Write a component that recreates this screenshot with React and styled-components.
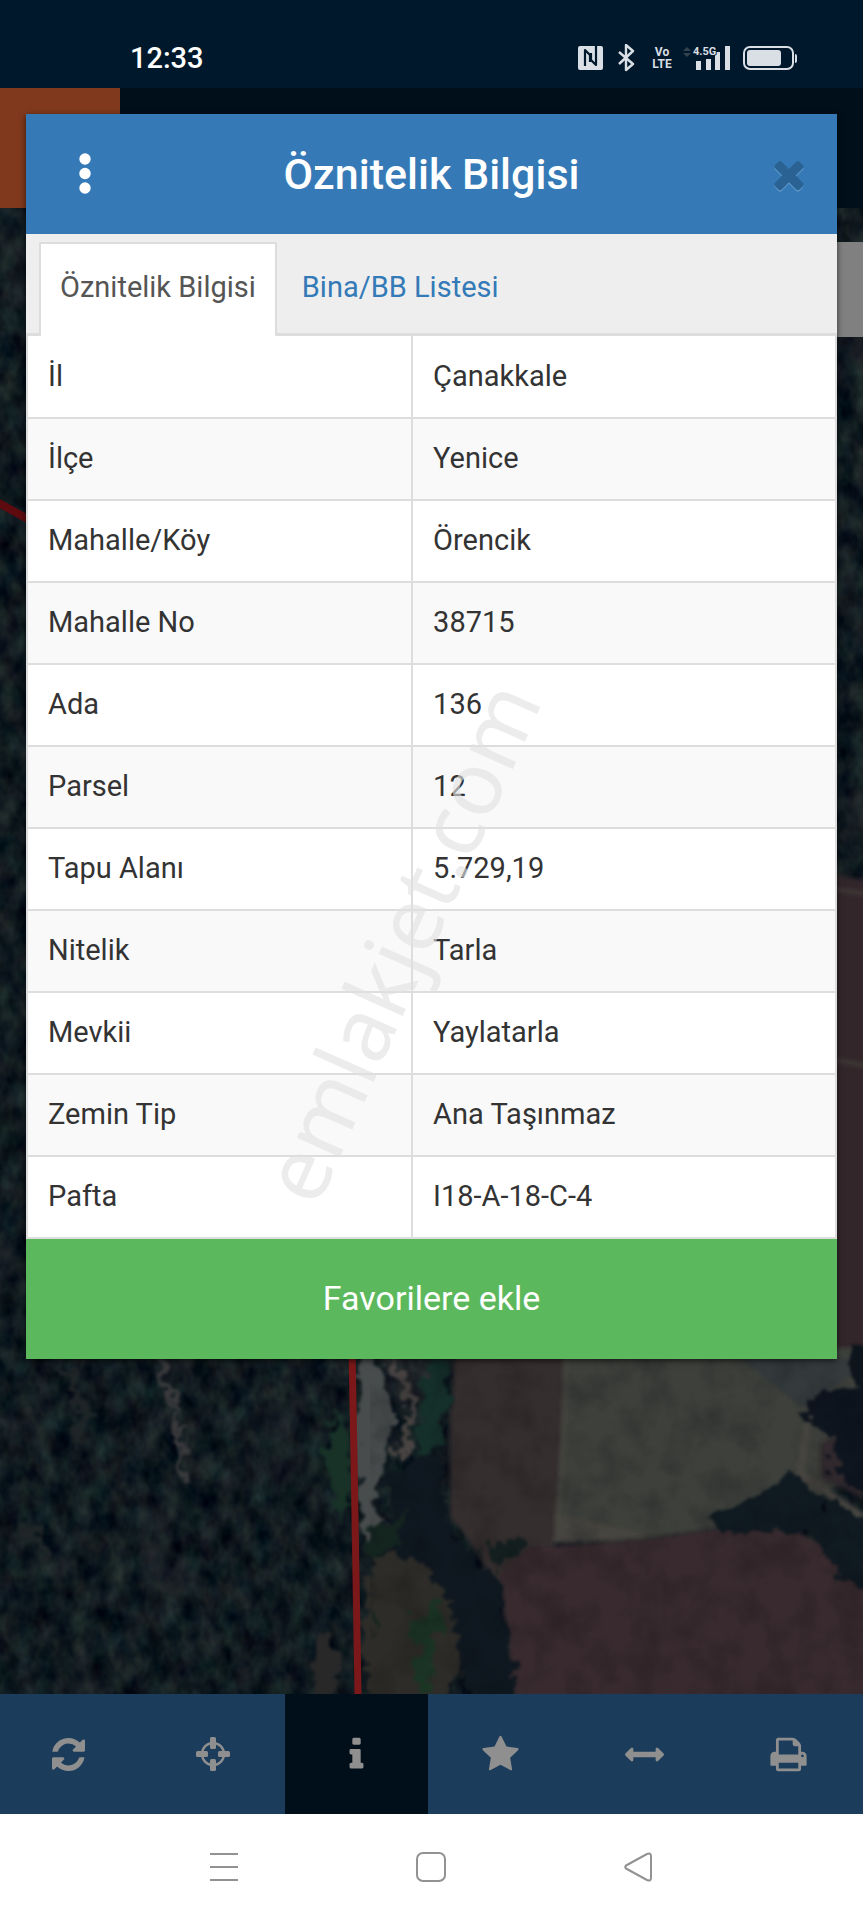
import React, { useState } from "react";
import styled, { createGlobalStyle } from "styled-components";

const GlobalStyle = createGlobalStyle`
  * {
    box-sizing: border-box;
  }

  body {
    margin: 0;
    background: #000f1a;
    font-family: Roboto, "Liberation Sans", sans-serif;
  }

  button {
    font-family: inherit;
    border: none;
    padding: 0;
    cursor: pointer;
  }
`;

const Screen = styled.div`
  position: relative;
  display: flex;
  flex-direction: column;
  min-height: 100vh;
`;

const StatusBar = styled.header`
  display: flex;
  align-items: center;
  justify-content: space-between;
  height: 88px;
  padding: 28px 66px 0 130px;
  background: #00182b;
  color: #fff;
`;

const Clock = styled.time`
  font-size: 29px;
  line-height: 32px;
  font-weight: 500;
`;

const StatusIcons = styled.div`
  display: flex;
  align-items: center;
  color: #d9dfe5;

  svg {
    display: block;
  }
`;

const Volte = styled.div`
  display: flex;
  flex-direction: column;
  align-items: center;
  width: 22px;
  margin: 0 10px 0 16px;
  font-size: 12px;
  line-height: 12px;
  font-weight: 700;
`;

const AppBar = styled.div`
  height: 120px;
  background: #000f1a;
`;

const AppLogo = styled.div`
  width: 120px;
  height: 100%;
  background: #80391c;
`;

const MapArea = styled.main`
  position: relative;
  flex: 1;
  min-height: 1180px;
  overflow: hidden;
  background: #111b21;

  & > svg {
    position: absolute;
    width: 100%;
    height: 100%;
  }
`;

const SidePanel = styled.div`
  position: absolute;
  top: 34px;
  right: 0;
  width: 60px;
  height: 95px;
  background: #808080;
`;

const Toolbar = styled.nav`
  height: 120px;
  background: #1b3d5b;
`;

const ToolList = styled.div`
  display: grid;
  grid-template-columns: repeat(6, 1fr);
  height: 100%;
  margin: 0 3px 0 -3px;
`;

const ToolButton = styled.button`
  display: flex;
  align-items: center;
  justify-content: center;
  color: #8f8f8f;
  background: ${({ $active }) => ($active ? "#000f1a" : "transparent")};
`;

const SystemNav = styled.nav`
  display: grid;
  grid-template-columns: repeat(3, 24%);
  justify-content: center;
  height: 106px;
  background: #fff;

  button {
    display: flex;
    align-items: center;
    justify-content: center;
    background: none;
  }
`;

const Dialog = styled.section`
  position: absolute;
  top: 114px;
  left: 26px;
  right: 26px;
  background: #fff;
  box-shadow: 0 2px 6px rgba(0, 0, 0, 0.6);
`;

const DialogHeader = styled.div`
  display: grid;
  grid-template-columns: 117px 1fr 117px;
  align-items: center;
  height: 120px;
  background: #357ab7;
`;

const DialogTitle = styled.h1`
  margin: 0;
  color: #fff;
  font-size: 43px;
  line-height: 48px;
  font-weight: 500;
  text-align: center;
`;

const IconButton = styled.button`
  display: flex;
  align-items: center;
  justify-content: center;
  justify-self: ${({ $end }) => ($end ? "end" : "stretch")};
  min-width: 97px;
  height: 100%;
  background: none;
  color: ${({ color }) => color};
`;

const Tabs = styled.div`
  display: flex;
  gap: 4px;
  height: 102px;
  padding: 8px 13px 0;
  background: #eeeeef;
  border-bottom: 3px solid #ddd;
`;

const Tab = styled.button`
  height: 94px;
  padding: 0 19px 6px;
  border: 2px solid ${({ $active }) => ($active ? "#ddd" : "transparent")};
  border-bottom: none;
  background: ${({ $active }) => ($active ? "#fff" : "transparent")};
  color: ${({ $active }) => ($active ? "#555" : "#337ab7")};
  font-size: 29px;
  line-height: 40px;
`;

const TableWrapper = styled.div`
  position: relative;
`;

const Table = styled.table`
  width: 100%;
  table-layout: fixed;
  border-collapse: collapse;

  tr:nth-child(even) {
    background: #f9f9f9;
  }

  tr:first-child > * {
    border-top: none;
  }

  th,
  td {
    height: 82px;
    padding: 0 20px 2px;
    border: 2px solid #ddd;
    color: #333;
    font-size: 29px;
    line-height: 40px;
    font-weight: 400;
    text-align: left;
  }

  th {
    width: 47.6%;
  }
`;

const Watermark = styled.span`
  position: absolute;
  top: 67%;
  left: 46%;
  color: rgba(225, 225, 225, 0.62);
  font-family: "Noto Sans", "Open Sans", sans-serif;
  font-size: 88px;
  line-height: 96px;
  transform: translate(-50%, -50%) rotate(-66deg);
  pointer-events: none;
`;

const FavoriteButton = styled.button`
  display: block;
  width: 100%;
  height: 120px;
  padding-bottom: 2px;
  background: #5cb85c;
  color: #fff;
  font-size: 34px;
  line-height: 40px;
`;

const ROWS = [
  ["İl", "Çanakkale"],
  ["İlçe", "Yenice"],
  ["Mahalle/Köy", "Örencik"],
  ["Mahalle No", "38715"],
  ["Ada", "136"],
  ["Parsel", "12"],
  ["Tapu Alanı", "5.729,19"],
  ["Nitelik", "Tarla"],
  ["Mevkii", "Yaylatarla"],
  ["Zemin Tip", "Ana Taşınmaz"],
  ["Pafta", "I18-A-18-C-4"],
];

const TABS = ["Öznitelik Bilgisi", "Bina/BB Listesi"];

// all on a 1792 unit grid
const TOOLS = [
  {
    label: "Yenile",
    box: "0 0 1536 1792",
    width: 33,
    path: "M1511 1056q0 5-1 7-64 268-268 434.5t-478 166.5q-146 0-282.5-55t-243.5-157l-129 129q-19 19-45 19t-45-19-19-45v-448q0-26 19-45t45-19h448q26 0 45 19t19 45-19 45l-137 137q71 66 161 102t187 36q134 0 250-65t186-179q11-17 53-117 8-23 30-23h192q13 0 22.5 9.5t9.5 22.5zm25-800v448q0 26-19 45t-45 19h-448q-26 0-45-19t-19-45 19-45l138-138q-148-137-349-137-134 0-250 65t-186 179q-11 17-53 117-8 23-30 23h-199q-13 0-22.5-9.5t-9.5-22.5v-7q65-268 270-434.5t480-166.5q146 0 284 55.5t245 156.5l130-129q19-19 45-19t45 19 19 45z",
  },
  { label: "Konum", crosshair: true },
  {
    label: "Bilgi",
    path: "M1216 1344v128q0 26-19 45t-45 19h-512q-26 0-45-19t-19-45v-128q0-26 19-45t45-19h64v-384h-64q-26 0-45-19t-19-45v-128q0-26 19-45t45-19h384q26 0 45 19t19 45v576h64q26 0 45 19t19 45zm-128-1152v192q0 26-19 45t-45 19h-256q-26 0-45-19t-19-45v-192q0-26 19-45t45-19h256q26 0 45 19t19 45z",
  },
  {
    label: "Favoriler",
    path: "M1728 647q0 22-26 48l-363 354 86 500q1 7 1 20 0 21-10.5 35.5t-30.5 14.5q-19 0-40-12l-449-236-449 236q-22 12-40 12-21 0-31.5-14.5t-10.5-35.5q0-6 2-20l86-500-364-354q-25-27-25-48 0-37 56-46l502-73 225-455q19-41 49-41t49 41l225 455 502 73q56 9 56 46z",
  },
  {
    label: "Ölçüm",
    path: "M1792 896q0 26-19 45l-256 256q-19 19-45 19t-45-19-19-45v-128h-1024v128q0 26-19 45t-45 19-45-19l-256-256q-19-19-19-45t19-45l256-256q19-19 45-19t45 19 19 45v128h1024v-128q0-26 19-45t45-19 45 19l256 256q19 19 19 45z",
  },
  {
    label: "Yazdır",
    path: "M448 1536h896v-256h-896v256zm0-640h896v-384h-160q-40 0-68-28t-28-68v-160h-640v640zm1152 64q0-26-19-45t-45-19-45 19-19 45 19 45 45 19 45-19 19-45zm128 0v416q0 13-9.5 22.5t-22.5 9.5h-224v160q0 40-28 68t-68 28h-960q-40 0-68-28t-28-68v-160h-224q-13 0-22.5-9.5t-9.5-22.5v-416q0-79 56.5-135.5t135.5-56.5h64v-544q0-40 28-68t68-28h672q40 0 88 20t76 48l152 152q28 28 48 76t20 88v256h64q79 0 135.5 56.5t56.5 135.5z",
  },
];

const CLOSE_PATH =
  "M1490 1322q0 40-28 68l-136 136q-28 28-68 28t-68-28l-294-294-294 294q-28 28-68 28t-68-28l-136-136q-28-28-28-68t28-68l294-294-294-294q-28-28-28-68t28-68l136-136q28-28 68-28t68 28l294 294 294-294q28-28 68-28t68 28l136 136q28 28 28 68t-28 68l-294 294 294 294q28 28 28 68z";

const ToolIcon = ({ tool }) => {
  if (tool.crosshair) {
    return (
      <svg width="34" height="34" viewBox="0 0 34 34" fill="currentColor">
        <circle cx="17" cy="17" r="11" fill="none" stroke="currentColor" strokeWidth="2.4" />
        <rect x="14" y="0" width="6" height="12" rx="1.5" />
        <rect x="14" y="22" width="6" height="12" rx="1.5" />
        <rect x="0" y="14" width="12" height="6" rx="1.5" />
        <rect x="22" y="14" width="12" height="6" rx="1.5" />
      </svg>
    );
  }
  return (
    <svg
      width={tool.width || 39}
      height="39"
      viewBox={tool.box || "0 0 1792 1792"}
      fill="currentColor"
    >
      <path d={tool.path} />
    </svg>
  );
};

const PhoneStatus = () => (
  <StatusIcons>
    <svg width="57" height="28" viewBox="0 0 57 28" fill="none">
      <rect x="0" y="2" width="25" height="24" rx="2" fill="currentColor" />
      <path
        d="M7 22V6l5 5v7M18 2v19l-5-5V9"
        stroke="#00182b"
        strokeWidth="2.2"
        strokeLinejoin="round"
      />
      <path
        d="M41 8l14 12-7 6V1l7 6-14 13"
        stroke="currentColor"
        strokeWidth="2.4"
        strokeLinejoin="round"
      />
    </svg>
    <Volte>
      <span>Vo</span>
      <span>LTE</span>
    </Volte>
    <svg width="48" height="28" viewBox="0 0 48 28" fill="currentColor">
      <path d="M0 7l4-4 4 4zM0 9l4 4 4-4z" fill="#34424f" />
      <rect x="13" y="17" width="5" height="9" />
      <rect x="23" y="15" width="5" height="11" />
      <rect x="32" y="8" width="5" height="18" />
      <rect x="42" y="2" width="5" height="24" />
      <text
        x="10"
        y="11"
        fontFamily="Roboto, sans-serif"
        fontSize="11"
        fontWeight="700"
        stroke="#00182b"
        strokeWidth="2"
        paintOrder="stroke"
      >
        4.5G
      </text>
    </svg>
    <svg width="66" height="28" viewBox="-12 0 66 28" fill="none">
      <rect x="1" y="3" width="49" height="22" rx="6" stroke="currentColor" strokeWidth="2" />
      <rect x="4" y="6" width="34" height="16" rx="3" fill="currentColor" />
      <path d="M52 10q2 0 2 2v5q0 2-2 2z" fill="currentColor" />
    </svg>
  </StatusIcons>
);

const SatelliteMap = () => (
  <svg viewBox="0 0 863 1486" preserveAspectRatio="xMidYMax slice" aria-hidden="true">
    <defs>
      <filter
        id="forest"
        x="0"
        y="0"
        width="100%"
        height="100%"
        colorInterpolationFilters="sRGB"
      >
        <feTurbulence type="fractalNoise" baseFrequency="0.055 0.04" numOctaves="3" seed="7" />
        <feColorMatrix values="0.22 0.07 0 0 -0.085  0.25 0 0 0 -0.025  0.18 0 0.04 0 0.01  0 0 0 0 1" />
      </filter>
      <filter
        id="clearings"
        x="0"
        y="0"
        width="100%"
        height="100%"
        colorInterpolationFilters="sRGB"
      >
        <feTurbulence type="fractalNoise" baseFrequency="0.016 0.01" numOctaves="4" seed="12" />
        <feColorMatrix values="0 0 0 0 0.23  0 0 0 0 0.22  0 0 0 0 0.23  3 0 0 0 -1.75" />
      </filter>
      <filter
        id="soil"
        x="0"
        y="0"
        width="100%"
        height="100%"
        colorInterpolationFilters="sRGB"
      >
        <feTurbulence type="fractalNoise" baseFrequency="0.03" numOctaves="5" seed="3" />
        <feColorMatrix values="0 0 0 0 0  0 0 0 0 0  0 0 0 0 0.03  0.4 0 0 0 -0.16" />
      </filter>
      <filter
        id="ragged"
        x="-10%"
        y="-10%"
        width="120%"
        height="120%"
        colorInterpolationFilters="sRGB"
      >
        <feTurbulence type="fractalNoise" baseFrequency="0.06" numOctaves="3" seed="5" />
        <feDisplacementMap
          in="SourceGraphic"
          scale="30"
          xChannelSelector="R"
          yChannelSelector="G"
        />
        <feGaussianBlur stdDeviation="1.6" />
      </filter>
      <filter id="soft">
        <feGaussianBlur stdDeviation="2" />
      </filter>
      <clipPath id="edge">
        <path d="M370 1140h493v346H370z" />
      </clipPath>
    </defs>
    <rect width="863" height="1486" filter="url(#forest)" />
    <rect width="863" height="1486" filter="url(#clearings)" opacity="0.5" />

    <g filter="url(#soft)">
      <path d="M825 665l43 8v470l-43 20z" fill="#30282b" />
      <path d="M825 680l43 6M825 850l43 8" stroke="#3d3535" strokeWidth="5" />
      <path d="M455 1140H568V1240L558 1330 530 1372 500 1380 460 1320 450 1310V1220z" fill="#342d2f" />
      <path d="M566 1140H868V1260L800 1300 715 1320 640 1331 555 1335z" fill="#3c3f3a" />
      <path d="M566 1140l-3 100-7 95" stroke="#474642" strokeWidth="4" fill="none" />
      <path d="M555 1305l90 20 0 6-90 4z" fill="#46443f" />
      <path d="M500 1368l28-28 112-8 80-12h70l78 40v136H500l10-46z" fill="#382b2e" />
      <path d="M808 1215l-8 50 63 45M808 1210l40-60" stroke="#4a4642" strokeWidth="8" fill="none" />
      <path d="M820 1235l43-20v75l-43-20z" fill="#332b2d" />
      <path d="M740 1150h123v10l-60 40z" fill="#353b3c" />
    </g>

    <g filter="url(#ragged)">
      <path d="M358 1140h18l14 48 8 20-8 34-12 40 4 30-12 24-14-16z" fill="#484c4c" />
      <path d="M390 1150l20 40v35l-16 26" stroke="#4a4543" strokeWidth="7" fill="none" />
      <path d="M155 1145l12 35 12 30-2 40 8 25" stroke="#3a3a3c" strokeWidth="6" fill="none" />
      <path d="M60 1150l25 60-12 30M20 1310l30 40" stroke="#1f2527" strokeWidth="8" fill="none" />
      <path d="M430 1140h20l-2 60-14 50-18 30 5-70z" fill="#15302a" />
      <path d="M335 1200l14 30 2 50-10 40-16-70z" fill="#183227" />
      <path d="M370 1350l50-10 35 60 8 50-20 46h-70l-12-60z" fill="#2d2c28" />
      <path d="M318 1430l25 12-8 44h-24z" fill="#292829" />
      <path d="M385 1270l50-30 18 90 50 50 14 116h-46l-14-80-30-60-30-6z" fill="#0f1820" />
      <path d="M415 1405l22-16 8 30-12 16 0 50-20-10z" fill="#1b3525" />
      <path d="M368 1320l40-15-8 32-30 15zM370 1395l12 18-8 14z" fill="#14241f" />
      <path d="M480 1340l40-14 4 16-30 22z" fill="#14201f" />
      <path d="M708 1315l40-24 44-24 24 20 57 30v66l-40-18-15-35-40-10-46 5z" fill="#101a21" />
      <path d="M805 1195l68-30v125l-40-24 4-40-32-10z" fill="#0e151f" />
      <path d="M850 1140h23v32h-18z" fill="#0d141c" />
    </g>
    <g clipPath="url(#edge)">
      <rect width="863" height="1486" filter="url(#soil)" />
    </g>

    <path d="M-5 293l40 22" stroke="#5e0b10" strokeWidth="8" />
    <path d="M352 1140l2 110 4 236" stroke="#7c1819" strokeWidth="7" fill="none" />
  </svg>
);

const App = () => {
  const [activeTab, setActiveTab] = useState(0);
  const [activeTool, setActiveTool] = useState("Bilgi");

  return (
    <Screen>
      <GlobalStyle />
      <StatusBar>
        <Clock>12:33</Clock>
        <PhoneStatus />
      </StatusBar>
      <AppBar>
        <AppLogo />
      </AppBar>
      <MapArea>
        <SatelliteMap />
        <SidePanel />
      </MapArea>
      <Toolbar>
        <ToolList>
          {TOOLS.map((tool) => (
            <ToolButton
              key={tool.label}
              type="button"
              aria-label={tool.label}
              $active={tool.label === activeTool}
              onClick={() => setActiveTool(tool.label)}
            >
              <ToolIcon tool={tool} />
            </ToolButton>
          ))}
        </ToolList>
      </Toolbar>
      <SystemNav>
        <button type="button" aria-label="Son uygulamalar">
          <svg width="30" height="30" viewBox="0 0 30 30" stroke="#929292" strokeWidth="2">
            <path d="M1 2h28M1 15h28M1 28h28" />
          </svg>
        </button>
        <button type="button" aria-label="Ana ekran">
          <svg width="30" height="30" viewBox="0 0 30 30" fill="none" stroke="#929292" strokeWidth="2">
            <rect x="1" y="1" width="28" height="28" rx="6" />
          </svg>
        </button>
        <button type="button" aria-label="Geri">
          <svg
            width="30"
            height="30"
            viewBox="0 0 30 30"
            fill="none"
            stroke="#929292"
            strokeWidth="2"
            strokeLinejoin="round"
          >
            <path d="M2 13.500q-1.500 1.500 0 3L23 28q4 1.500 4-2V4q0-3.500-4-2z" />
          </svg>
        </button>
      </SystemNav>

      <Dialog role="dialog" aria-labelledby="dialog-title">
        <DialogHeader>
          <IconButton type="button" aria-label="Menü" color="#fff">
            <svg width="12" height="42" viewBox="0 0 12 42" fill="currentColor">
              <circle cx="6" cy="6" r="5.700" />
              <circle cx="6" cy="20.500" r="5.700" />
              <circle cx="6" cy="35" r="5.700" />
            </svg>
          </IconButton>
          <DialogTitle id="dialog-title">Öznitelik Bilgisi</DialogTitle>
          <IconButton type="button" aria-label="Kapat" color="#2a6293" $end>
            <svg width="44" height="44" viewBox="0 0 1792 1792" fill="currentColor">
              <path d={CLOSE_PATH} fill="#5e97c8" transform="translate(0 60)" />
              <path d={CLOSE_PATH} />
            </svg>
          </IconButton>
        </DialogHeader>
        <Tabs role="tablist">
          {TABS.map((name, index) => (
            <Tab
              key={name}
              type="button"
              role="tab"
              aria-selected={index === activeTab}
              $active={index === activeTab}
              onClick={() => setActiveTab(index)}
            >
              {name}
            </Tab>
          ))}
        </Tabs>
        <TableWrapper>
          <Table>
            <tbody>
              {ROWS.map(([label, value]) => (
                <tr key={label}>
                  <th scope="row">{label}</th>
                  <td>{value}</td>
                </tr>
              ))}
            </tbody>
          </Table>
          <Watermark>emlakjet.com</Watermark>
        </TableWrapper>
        <FavoriteButton type="button">Favorilere ekle</FavoriteButton>
      </Dialog>
    </Screen>
  );
};

export default App;
